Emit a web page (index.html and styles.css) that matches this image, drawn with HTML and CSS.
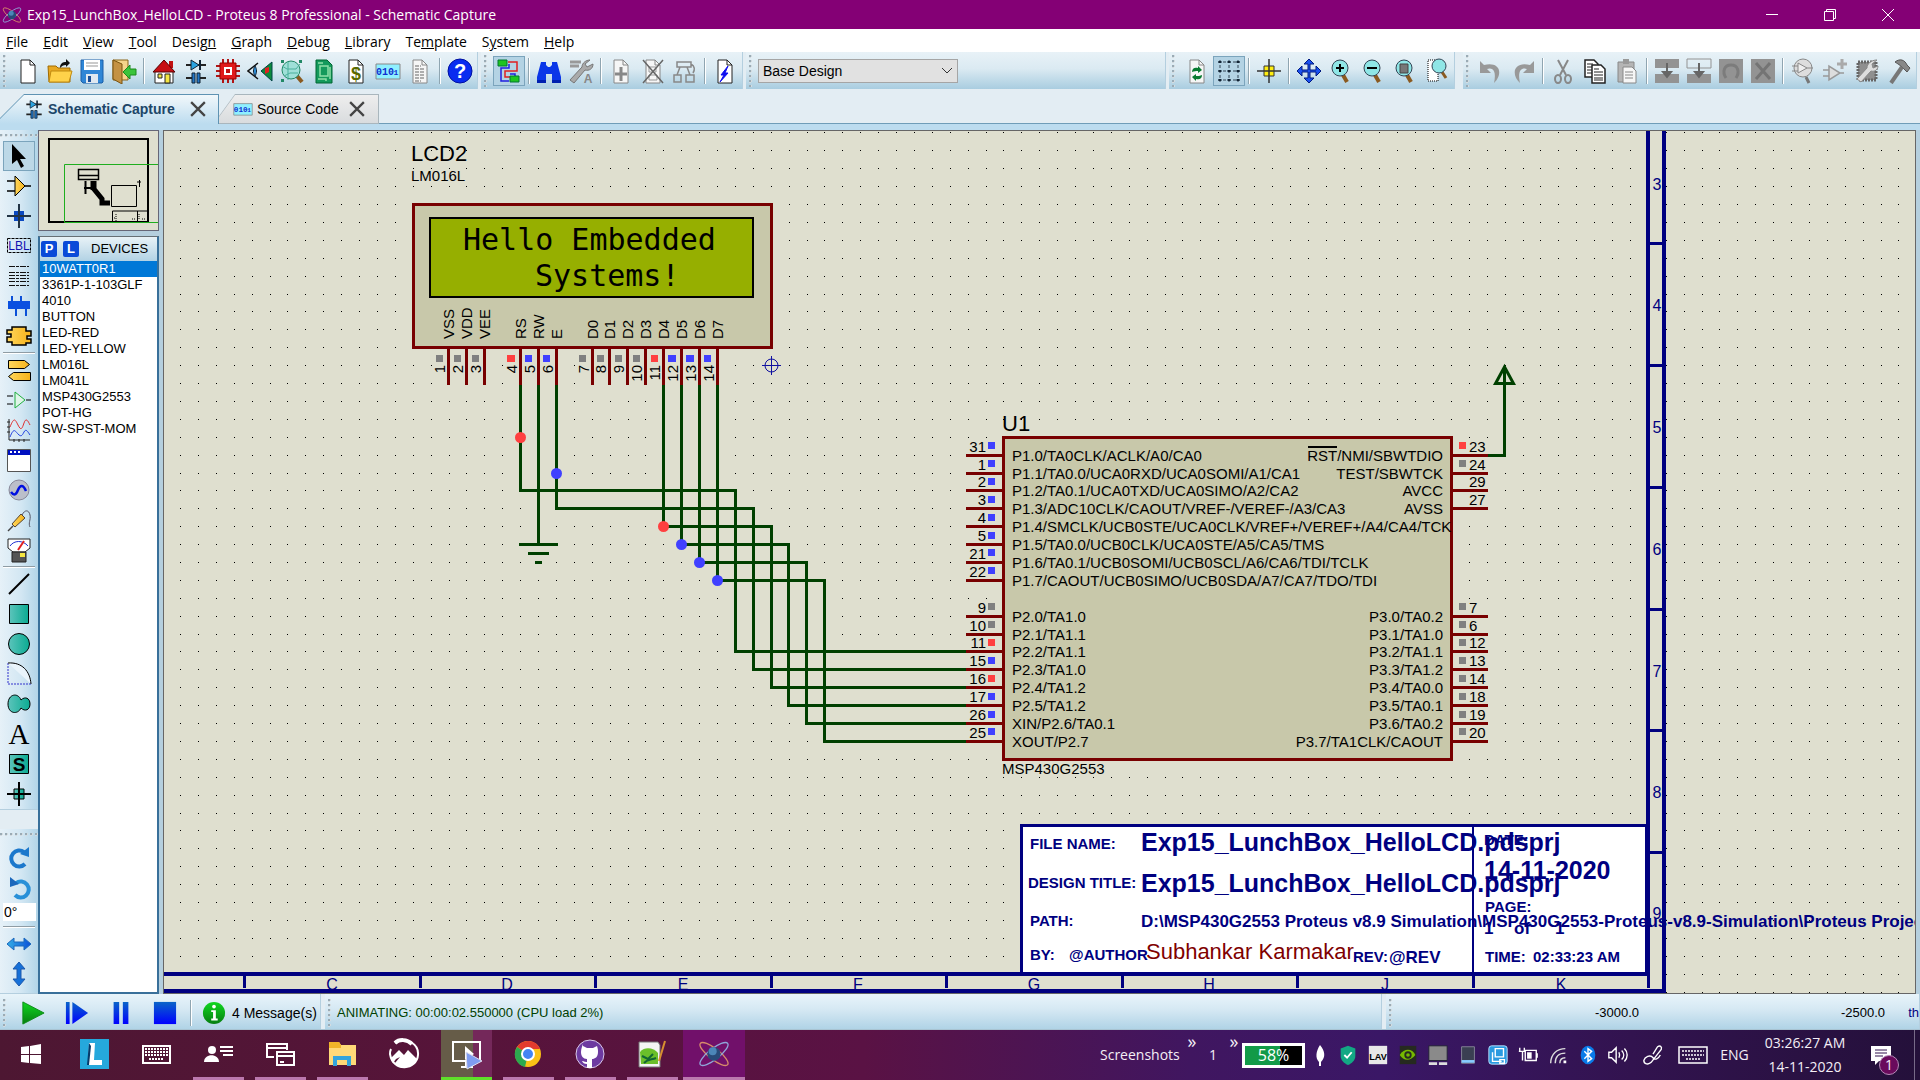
FILE: index.html
```html
<!DOCTYPE html>
<html lang="en">
<head>
<meta charset="utf-8">
<title>Exp15_LunchBox_HelloLCD - Proteus 8 Professional - Schematic Capture</title>
<link rel="stylesheet" href="styles.css">
</head>
<body>
<svg class="defs" aria-hidden="true">
  <defs>
    <linearGradient id="teal"><stop offset="0" stop-color="#5cc4bb"/><stop offset="1" stop-color="#0bab92"/></linearGradient>
    <linearGradient id="gold"><stop offset="0" stop-color="#ffd65c"/><stop offset="1" stop-color="#f5b21a"/></linearGradient>
    <linearGradient id="blue" x2="0" y2="1"><stop offset="0" stop-color="#0a64c8"/><stop offset="1" stop-color="#0000ff"/></linearGradient>
    <linearGradient id="sky"><stop offset="0" stop-color="#35aee6"/><stop offset="1" stop-color="#0a50d8"/></linearGradient>
    <linearGradient id="green" x2="0" y2="1"><stop offset="0" stop-color="#10d820"/><stop offset="1" stop-color="#067d10"/></linearGradient>
  </defs>
  <symbol id="atom" viewBox="0 0 24 24"><g fill="none" stroke-width="1"><ellipse cx="12" cy="12" rx="13" ry="4" transform="rotate(38 12 12)" stroke="#d78c6a"/><ellipse cx="12" cy="12" rx="13" ry="4" transform="rotate(-38 12 12)" stroke="#8fa5d9"/></g><circle cx="12" cy="12" r="5" fill="#284a78"/><circle cx="11" cy="10" r="3" fill="#4c86b8"/></symbol>
  <symbol id="diode" viewBox="0 0 26 26"><path d="M3 7h20M3 20h6M17 20h6" stroke="#222" stroke-width="2"/><path d="M8 2v10l8-5z" fill="#2ba3e0" stroke="#123"/><path d="M17 2v10" stroke="#123" stroke-width="2"/><path d="M9 15h3v10H9zM14 15h3v10h-3z" fill="#2277c8" stroke="#123"/></symbol>
  <symbol id="code" viewBox="0 0 26 26"><path d="M1 6h24v15H1z" fill="#8ff0ff" stroke="#888"/><text x="10" y="17" text-anchor="middle" class="code-text">010</text><text x="21" y="17" text-anchor="middle" class="code-small">1</text></symbol>
  <symbol id="loupe" viewBox="0 0 26 26"><path d="M15 17l4 7" stroke="#8a5a20" stroke-width="4"/><circle cx="12" cy="10" r="8" fill="#8fe6e6" stroke="#345"/></symbol>
  <symbol id="page" viewBox="0 0 26 26"><path d="M6 2h9l5 5v18H6z" fill="#fff" stroke="#222"/><path d="M15 2v5h5" fill="none" stroke="#222"/></symbol>
  <symbol id="page-gray" viewBox="0 0 26 26"><path d="M6 2h9l5 5v18H6z" fill="#f6f6f6" stroke="#888"/><path d="M15 2v5h5" fill="none" stroke="#888"/></symbol>
</svg>

<header class="titlebar">
  <svg class="app-icon"><use href="#atom"/></svg>
  <h1>Exp15_LunchBox_HelloLCD - Proteus 8 Professional - Schematic Capture</h1>
  <div class="window-controls">
    <button type="button" aria-label="Minimize"><svg viewBox="0 0 14 14"><path d="M1 6.500h12"/></svg></button>
    <button type="button" aria-label="Restore"><svg viewBox="0 0 14 14"><path d="M1.500 3.500h9v9h-9zM3.500 3.500v-2h9v9h-2"/></svg></button>
    <button type="button" aria-label="Close"><svg viewBox="0 0 14 14"><path d="M1 1l12 12M13 1L1 13"/></svg></button>
  </div>
</header>

<nav class="menubar">
  <a href="#"><u>F</u>ile</a><a href="#"><u>E</u>dit</a><a href="#"><u>V</u>iew</a><a href="#"><u>T</u>ool</a><a href="#">Desig<u>n</u></a><a href="#"><u>G</u>raph</a><a href="#"><u>D</u>ebug</a><a href="#"><u>L</u>ibrary</a><a href="#">Te<u>m</u>plate</a><a href="#">S<u>y</u>stem</a><a href="#"><u>H</u>elp</a>
</nav>

<div class="toolbars">
  <div class="toolbar">
    <span class="grip"></span>
    <button type="button" aria-label="New"><svg viewBox="0 0 26 26"><use href="#page"/></svg></button>
    <button type="button" aria-label="Open"><svg viewBox="0 0 26 26"><path d="M1 8h8l2 2h12v14H2z" fill="#e8a820" stroke="#a06a00"/><path d="M4 13h21l-3 11H2z" fill="#ffd24a" stroke="#c08a10"/><path d="M13 10c0-5 3-6 6-6V1l4 4-4 4V7c-3 0-4 1-6 3z" fill="#111"/></svg></button>
    <button type="button" aria-label="Save"><svg viewBox="0 0 26 26"><path d="M2 2h22v22l-1 1H4l-2-2z" fill="#2f86d6" stroke="#1b5fa8"/><path d="M5 2h16v10H5z" fill="#fff"/><path d="M7 5h12M7 8h12" stroke="#bbb" stroke-width="1.500"/><path d="M7 16h12v9H7z" fill="#dfe8f0"/><path d="M9 18h3v6H9z" fill="#1b4f98"/></svg></button>
    <button type="button" aria-label="Close project"><svg viewBox="0 0 26 26"><path d="M2 2h15v20H2z" fill="#f5d48a" stroke="#8a6418"/><path d="M2 2l9 4v20l-9-5z" fill="#c49244" stroke="#7a5410"/><path d="M25 11v6h-6v4l-7-7 7-7v4z" fill="#3bc43b" stroke="#1c8a1c"/></svg></button>
    <span class="sep"></span>
    <button type="button" aria-label="Home"><svg viewBox="0 0 26 26"><path d="M4 13h18v12H4z" fill="#fff" stroke="#222"/><path d="M18 3h4v7h-4z" fill="#c01010"/><path d="M2 14L13 2l11 12z" fill="#c80f14" stroke="#500"/><path d="M14 16h5v9h-5z" fill="#f5e642" stroke="#222"/><path d="M7 16h4v4H7z" fill="#f5e642" stroke="#222"/></svg></button>
    <button type="button" aria-label="Schematic"><svg viewBox="0 0 26 26"><use href="#diode"/></svg></button>
    <button type="button" aria-label="PCB layout"><svg viewBox="0 0 26 26"><path d="M8 1v24M13 1v24M18 1v24M1 8h24M1 13h24M1 18h24" stroke="#b01515" stroke-width="2"/><path d="M5 5h16v16H5z" fill="#e01a1a" stroke="#900"/><path d="M9 9h8v8H9z" fill="#fff"/><path d="M11 11h4v4h-4z" fill="#c01010"/></svg></button>
    <button type="button" aria-label="3D viewer"><svg viewBox="0 0 26 26"><path d="M14 13l11-9v19z" fill="#0c8a3c" stroke="#044"/><path d="M18 10l4-1v5l-4 2z" fill="#e02020"/><path d="M11 5L1 13l10 8" fill="none" stroke="#111" stroke-width="1.500"/><path d="M8 8c2 3 2 7 0 10-2-3-2-7 0-10z" fill="#2b8ed8" stroke="#123"/></svg></button>
    <button type="button" aria-label="Gerber viewer"><svg viewBox="0 0 26 26"><path d="M18 18l5 6" stroke="#8a5a20" stroke-width="4"/><circle cx="12" cy="12" r="9" fill="#9fe0d8" stroke="#286"/><path d="M3 8l5 3h9l4-5M5 18l6-3h8M9 4v18" stroke="#4bb09c" fill="none"/><path d="M2 2h3v3H2zM20 2h3v3h-3zM2 21h3v3H2z" fill="#286"/></svg></button>
    <button type="button" aria-label="Design explorer"><svg viewBox="0 0 26 26"><path d="M5 2h11l5 5v18H5z" fill="#149a5c" stroke="#063"/><path d="M9 8h8v10H9zM7 5h5M7 21h8v2M19 9v12" fill="none" stroke="#8fe0a8" stroke-width="1.500"/></svg></button>
    <button type="button" aria-label="Bill of materials"><svg viewBox="0 0 26 26"><use href="#page"/><text x="13" y="22" text-anchor="middle" class="dollar">$</text></svg></button>
    <button type="button" aria-label="Source code"><svg viewBox="0 0 26 26"><use href="#code"/></svg></button>
    <button type="button" aria-label="Project notes"><svg viewBox="0 0 26 26"><use href="#page-gray"/><path d="M8 8h6M8 11h9M8 14h9M8 17h9M8 20h9M8 23h6" stroke="#666" stroke-dasharray="4 1"/></svg></button>
    <span class="sep"></span>
    <button type="button" aria-label="Help"><svg viewBox="0 0 26 26"><circle cx="13" cy="13" r="12" fill="#0a2cf0" stroke="#0010a0"/><text x="13" y="20" text-anchor="middle" class="help-mark">?</text></svg></button>
  </div>

  <div class="toolbar">
    <span class="grip"></span>
    <button type="button" class="active" aria-label="Wire autorouter"><svg viewBox="0 0 26 26"><path d="M12 4h9v9H9v6h8" fill="none" stroke="#e02020" stroke-width="1.500"/><path d="M13 6v4H5v13h8M14 16h5v5" fill="none" stroke="#2020e0" stroke-width="1.500"/><path d="M2 2h9v6H2zM14 18h9v6h-9z" fill="#1fc41f" stroke="#073"/></svg></button>
    <span class="sep"></span>
    <button type="button" aria-label="Search"><svg viewBox="0 0 26 26"><path d="M5 4h5v3l2 2h2l2-2V4h5l4 15v3h-9v-6h-6v6H1v-3z" fill="#0a36e8"/><path d="M1 22h9v3H1zM16 22h9v3h-9z" fill="#0020b0"/></svg></button>
    <button type="button" aria-label="Property assignment"><svg viewBox="0 0 26 26"><path d="M2 4h11M2 8h9" stroke="#999" stroke-width="3"/><path d="M22 2l-5 4 2 3 6-3c0 5-4 7-8 6L6 25l-4-3L14 9c0-4 4-7 8-7z" fill="#aaa" stroke="#777"/><text x="20" y="25" text-anchor="middle" class="gray-a">A</text></svg></button>
    <span class="sep"></span>
    <button type="button" aria-label="New sheet"><svg viewBox="0 0 26 26"><use href="#page-gray"/><path d="M13 9v14M7 16h12" stroke="#888" stroke-width="3"/></svg></button>
    <button type="button" aria-label="Remove sheet"><svg viewBox="0 0 26 26"><use href="#page-gray"/><path d="M9 9h7v5H9zM9 17h8v5H9z" fill="none" stroke="#999"/><path d="M3 2l20 23M23 2L3 25" stroke="#666" stroke-width="1.500"/></svg></button>
    <button type="button" aria-label="Parent sheet"><svg viewBox="0 0 26 26"><path d="M5 4h14v5H5zM2 17h7v7H2zM14 17h8v7h-8zM8 9l-3 8M15 9l3 8M19 6c4 2 4 6 2 9" fill="none" stroke="#888" stroke-width="1.500"/></svg></button>
    <span class="sep"></span>
    <button type="button" aria-label="Electrical rules check"><svg viewBox="0 0 26 26"><use href="#page"/><path d="M16 8l-7 9h3l-4 7 8-9h-3z" fill="#1010f0" stroke="#1010f0"/></svg></button>
  </div>

  <div class="toolbar toolbar-variant">
    <span class="grip"></span>
    <div class="variant">
      <select aria-label="Design variant"><option>Base Design</option></select>
      <svg viewBox="0 0 12 8"><path d="M1 1l5 5 5-5"/></svg>
    </div>
  </div>

  <div class="toolbar">
    <span class="grip"></span>
    <button type="button" aria-label="Redraw"><svg viewBox="0 0 26 26"><use href="#page-gray"/><path d="M8 14c0-4 3-5 6-4V8l4 4-4 3v-2c-2 0-4 0-6 1zM18 17c0 4-3 5-6 4v2l-4-4 4-3v2c2 0 4 0 6-1z" fill="#087a30"/></svg></button>
    <button type="button" class="active" aria-label="Grid"><svg viewBox="0 0 26 26"><path d="M2 4h22M2 13h22M2 22h22M4 2v22M13 2v22M22 2v22" stroke="#345" stroke-dasharray="3 2"/><path d="M4 3v2M13 3v2M22 3v2M4 12v2M13 12v2M22 12v2M4 21v2M13 21v2M22 21v2" stroke="#123" stroke-width="3"/></svg></button>
    <span class="sep"></span>
    <button type="button" aria-label="Origin"><svg viewBox="0 0 26 26"><path d="M8 8h10v10H8z" fill="#ffee10" stroke="#333"/><path d="M13 1v24M1 13h24" stroke="#333" stroke-width="1.500"/></svg></button>
    <span class="sep"></span>
    <button type="button" aria-label="Pan"><svg viewBox="0 0 26 26"><path d="M13 1l5 5h-4v6h6V8l5 5-5 5v-4h-6v6h4l-5 5-5-5h4v-6H6v4l-5-5 5-5v4h6V6H8z" fill="#1a50f0" stroke="#001a80"/></svg></button>
    <button type="button" aria-label="Zoom in"><svg viewBox="0 0 26 26"><use href="#loupe"/><path d="M12 6v8M8 10h8" stroke="#000" stroke-width="2"/></svg></button>
    <button type="button" aria-label="Zoom out"><svg viewBox="0 0 26 26"><use href="#loupe"/><path d="M7 10h10" stroke="#000" stroke-width="2"/></svg></button>
    <button type="button" aria-label="Zoom to sheet"><svg viewBox="0 0 26 26"><use href="#loupe"/><path d="M8 6h8v9H8z" fill="#777" stroke="#444"/></svg></button>
    <button type="button" aria-label="Zoom to area"><svg viewBox="0 0 26 26"><path d="M4 2h10v21H4z" fill="#fff" stroke="#000" stroke-dasharray="1 1"/><path d="M18 14l4 6" stroke="#8a5a20" stroke-width="3"/><circle cx="15" cy="8" r="7" fill="#8fe6e6" stroke="#345"/></svg></button>
  </div>

  <div class="toolbar">
    <span class="grip"></span>
    <button type="button" aria-label="Undo"><svg viewBox="0 0 26 26"><path d="M2 3v12h11l-4-4c5-2 10 1 7 14 9-8 7-22-10-18z" fill="#999"/></svg></button>
    <button type="button" aria-label="Redo"><svg viewBox="0 0 26 26"><path d="M24 3v12H13l4-4c-5-2-10 1-7 14C1 17 3 3 20 7z" fill="#999"/></svg></button>
    <span class="sep"></span>
    <button type="button" aria-label="Cut"><svg viewBox="0 0 26 26"><path d="M8 2l8 15M18 2l-8 15" stroke="#888" stroke-width="2"/><g fill="none" stroke="#888" stroke-width="2"><ellipse cx="8" cy="21" rx="3" ry="4"/><ellipse cx="18" cy="21" rx="3" ry="4"/></g></svg></button>
    <button type="button" aria-label="Copy"><svg viewBox="0 0 26 26"><path d="M3 2h9l4 4v13H3z" fill="#fff" stroke="#222" stroke-width="1.500"/><path d="M5 6h6M5 9h5M5 12h5M5 15h5" stroke="#222"/><path d="M10 7h9l4 4v14H10z" fill="#fff" stroke="#222" stroke-width="1.500"/><path d="M12 11h5M12 14h9M12 17h9M12 20h9M12 22h9" stroke="#222"/></svg></button>
    <button type="button" aria-label="Paste"><svg viewBox="0 0 26 26"><path d="M4 4h16v20H4z" fill="#b5b5b5" stroke="#888"/><path d="M9 1h6v5H9z" fill="#999"/><path d="M9 9h9l4 4v12H9z" fill="#f6f6f6" stroke="#888"/><path d="M11 14h8M11 17h8M11 20h8" stroke="#888"/></svg></button>
    <span class="sep"></span>
    <button type="button" aria-label="Block copy"><svg viewBox="0 0 26 26"><path d="M1 1h24v9H1zM1 16h24v9H1z" fill="#939393"/><path d="M13 5v13M9 14l4 5 4-5z" stroke="#666" fill="#666" stroke-width="2"/></svg></button>
    <button type="button" aria-label="Block move"><svg viewBox="0 0 26 26"><path d="M1 1h24v9H1z" fill="none" stroke="#939393"/><path d="M1 16h24v9H1z" fill="#939393"/><path d="M13 5v13M9 14l4 5 4-5z" stroke="#666" fill="#666" stroke-width="2"/></svg></button>
    <button type="button" aria-label="Block rotate"><svg viewBox="0 0 26 26"><path d="M1 1h24v24H1z" fill="#939393"/><path d="M8 20c-4-6-2-13 5-13s9 7 5 13" fill="none" stroke="#7c7c7c" stroke-width="3"/></svg></button>
    <button type="button" aria-label="Block delete"><svg viewBox="0 0 26 26"><path d="M1 1h24v24H1z" fill="#939393"/><path d="M6 5l14 16M20 5L6 21" stroke="#747474" stroke-width="3"/></svg></button>
    <span class="sep"></span>
    <button type="button" aria-label="Pick parts"><svg viewBox="0 0 26 26"><path d="M16 19l3 6" stroke="#777" stroke-width="3"/><circle cx="13" cy="10" r="9" fill="#ddd" stroke="#888"/><path d="M8 5v10l9-5zM2 8h6M2 13h6M17 10h6" fill="#eee" stroke="#888"/></svg></button>
    <button type="button" aria-label="Make device"><svg viewBox="0 0 26 26"><path d="M7 8v14l11-7zM1 12h6M1 18h6M18 15h4" fill="#ddd" stroke="#999" stroke-width="1.500"/><path d="M20 1v10M15 6h10" stroke="#aaa" stroke-width="3"/></svg></button>
    <button type="button" aria-label="Packaging tool"><svg viewBox="0 0 26 26"><path d="M4 4h18v18H4z" fill="#8f8f8f" stroke="#666" stroke-dasharray="2 1" stroke-width="3"/><path d="M23 2l-5 4 1 4 5-2c0 4-4 6-7 5L7 24l-4-3 10-11c0-4 4-8 10-8z" fill="#ddd" stroke="#888"/></svg></button>
    <button type="button" aria-label="Decompose"><svg viewBox="0 0 26 26"><path d="M9 4c5-4 10-2 12 3l3 3-3 4-4-4C14 7 12 6 9 4z" fill="#888" stroke="#555"/><path d="M16 9L5 25" stroke="#777" stroke-width="4"/></svg></button>
  </div>
</div>

<div class="tabs">
  <div class="tab current">
    <button type="button" class="tab-name"><svg viewBox="0 0 26 26"><use href="#diode"/></svg>Schematic Capture</button>
    <button type="button" class="tab-close" aria-label="Close Schematic Capture"><svg viewBox="0 0 14 14"><path d="M1 1l12 12M13 1L1 13"/></svg></button>
  </div>
  <div class="tab">
    <button type="button" class="tab-name"><svg viewBox="0 0 26 26"><use href="#code"/></svg>Source Code</button>
    <button type="button" class="tab-close" aria-label="Close Source Code"><svg viewBox="0 0 14 14"><path d="M1 1l12 12M13 1L1 13"/></svg></button>
  </div>
</div>

<main class="workspace">
  <div class="modes">
    <div class="mode-group">
      <span class="grip-h"></span>
      <button type="button" class="active" aria-label="Selection"><svg viewBox="0 0 26 26"><path d="M6 1v20l5-4 4 8 3-2-4-7h6z" fill="#000"/></svg></button>
      <button type="button" aria-label="Component"><svg viewBox="0 0 26 26"><path d="M1 8h8M1 18h8M19 13h6" stroke="#000" stroke-width="1.500"/><path d="M9 3v20l10-10z" fill="url(#gold)" stroke="#000"/></svg></button>
      <button type="button" aria-label="Junction dot"><svg viewBox="0 0 26 26"><path d="M8 8h10v10H8z" fill="#0a48c0"/><path d="M13 1v24M1 13h24" stroke="#234" stroke-width="2"/></svg></button>
      <button type="button" aria-label="Wire label"><svg viewBox="0 0 26 26"><path d="M1.500 5.500h23v14h-23z" fill="none" stroke="#000" stroke-dasharray="3 1"/><text x="13" y="17" text-anchor="middle" class="lbl">LBL</text></svg></button>
      <button type="button" aria-label="Text script"><svg viewBox="0 0 26 26"><path d="M3 3.500h20M3 9.500h20M3 12.500h20M3 15.500h20M3 18.500h20M3 22.500h20" stroke="#111" stroke-dasharray="6 1 3 1"/></svg></button>
      <button type="button" aria-label="Buses"><svg viewBox="0 0 26 26"><path d="M6 3v9M15 3v9M10 15v8M20 15v8" stroke="#0a50d8" stroke-width="2"/><path d="M2 8h22v8H2z" fill="#0a50e0"/></svg></button>
      <button type="button" aria-label="Subcircuit"><svg viewBox="0 0 26 26"><path d="M6 4h14v4h5v5h-4v3h4v4h-5v2H6v-3H1v-5h4v-3H1V7h5z" fill="url(#gold)" stroke="#000" stroke-width="1.500"/></svg></button>
      <span class="sep-h"></span>
      <button type="button" aria-label="Terminals"><svg viewBox="0 0 26 26"><path d="M2.500 3.500h16l5 4-5 4h-16zM24.500 15.500h-17l-5 4 5 4h17z" fill="url(#gold)" stroke="#000"/></svg></button>
      <button type="button" aria-label="Device pins"><svg viewBox="0 0 26 26"><path d="M1 9h6M1 17h6M20 13h5" stroke="#000"/><path d="M9 5v16l10-8z" fill="#dff5e8" stroke="#20b040"/></svg></button>
      <button type="button" aria-label="Graph"><svg viewBox="0 0 26 26"><path d="M3 2v21h21M1 5h3M1 10h3M1 15h3M8 22v3M13 22v3M18 22v3" stroke="#222" fill="none"/><path d="M4 10c4-10 5-8 8-2s4 4 6-2 4-2 6 2" fill="none" stroke="#e03030"/><path d="M4 20c4-10 5-6 8-3s4 2 6-2 4 0 6 3" fill="none" stroke="#2040e0"/></svg></button>
      <button type="button" aria-label="Active popup"><svg viewBox="0 0 26 26"><path d="M1.500 2.500h23v22h-23z" fill="#fff" stroke="#555"/><path d="M2 3h22v5H2z" fill="#0010c0"/><path d="M4 5h2M8 5h2M12 5h2" stroke="#fff" stroke-width="2"/></svg></button>
      <button type="button" aria-label="Generator"><svg viewBox="0 0 26 26"><circle cx="13" cy="13" r="10" fill="#bbbfca" stroke="#889"/><path d="M5 15c3 4 5 3 7-2s5-6 8 1" fill="none" stroke="#0010e0" stroke-width="2.500"/></svg></button>
      <button type="button" aria-label="Probe"><svg viewBox="0 0 26 26"><path d="M2 24l5-5" stroke="#444" stroke-width="1.500"/><path d="M6 17L15 7l4 4-10 9z" fill="url(#gold)" stroke="#543"/><path d="M16 8c3-6 7-5 8 0s-2 8 0 12" fill="none" stroke="#556"/></svg></button>
      <button type="button" aria-label="Instruments"><svg viewBox="0 0 26 26"><path d="M2 2h22v9l-5 4H7l-5-4z" fill="#fff" stroke="#222"/><path d="M4 9c4-6 13-6 18 0" fill="none" stroke="#2030d0"/><path d="M12 13l6-9" stroke="#e02020" stroke-width="2"/><path d="M6 15h14v10H6z" fill="#555" stroke="#222"/><path d="M14 16h5v4h-5z" fill="#f5e642"/></svg></button>
      <span class="sep-h"></span>
      <button type="button" aria-label="Line"><svg viewBox="0 0 26 26"><path d="M3 23L23 3" stroke="#000" stroke-width="2"/></svg></button>
      <button type="button" aria-label="Box"><svg viewBox="0 0 26 26"><path d="M3.500 3.500h19v19h-19z" fill="url(#teal)" stroke="#000"/></svg></button>
      <button type="button" aria-label="Circle"><svg viewBox="0 0 26 26"><circle cx="13" cy="13" r="10.500" fill="url(#teal)" stroke="#000"/></svg></button>
      <button type="button" aria-label="Arc"><svg viewBox="0 0 26 26"><path d="M2 2v21h23" fill="none" stroke="#33c" stroke-dasharray="2 1"/><path d="M2 2c14-1 22 8 23 21" fill="#eaf4fb" stroke="#000"/></svg></button>
      <button type="button" aria-label="Path"><svg viewBox="0 0 26 26"><path d="M15 9c4-4 9-2 9 4s-5 8-9 4c-3 7-13 6-13-4s10-12 13-4z" fill="url(#teal)" stroke="#000"/></svg></button>
      <button type="button" aria-label="Text"><svg viewBox="0 0 26 26"><text x="13" y="23" text-anchor="middle" class="big-a">A</text></svg></button>
      <button type="button" aria-label="Symbol"><svg viewBox="0 0 26 26"><path d="M3.500 3.500h19v19h-19z" fill="url(#teal)" stroke="#000"/><text x="13" y="20" text-anchor="middle" class="big-s">S</text></svg></button>
      <button type="button" aria-label="Marker"><svg viewBox="0 0 26 26"><path d="M8 8h10v10H8z" fill="url(#teal)" stroke="#000"/><path d="M13 1v24M1 13h24" stroke="#000" stroke-width="2"/></svg></button>
    </div>
    <div class="mode-group mode-orient">
      <span class="grip-h"></span>
      <button type="button" aria-label="Rotate clockwise"><svg viewBox="0 0 26 26"><path d="M19 19a8 8 0 1 1-1-12" fill="none" stroke="#1c78cc" stroke-width="4"/><path d="M14 9l9-7v10z" fill="#1c78cc"/></svg></button>
      <button type="button" aria-label="Rotate anticlockwise"><svg viewBox="0 0 26 26"><path d="M9 20a8 8 0 1 0 1-12" fill="none" stroke="#2890d8" stroke-width="4"/><path d="M13 9L4 2v10z" fill="#1c68bc"/></svg></button>
      <input type="text" aria-label="Rotation" value="0°">
      <span class="sep-h"></span>
      <button type="button" aria-label="Mirror horizontally"><svg viewBox="0 0 26 26"><path d="M1 13l7-6v4h10V7l7 6-7 6v-4H8v4z" fill="url(#sky)" stroke="#1c68bc"/></svg></button>
      <button type="button" aria-label="Mirror vertically"><svg viewBox="0 0 26 26"><path d="M13 1l6 7h-4v10h4l-6 7-6-7h4V8H7z" fill="#1570d8" stroke="#1c58ac"/></svg></button>
    </div>
  </div>

  <aside class="side">
    <svg class="overview" role="img" aria-label="Sheet overview">
      <g transform="translate(-39 -131)" fill="none" stroke="#000">
        <path d="M49 139h99v83H49z" stroke-width="2"/>
        <path d="M78.500 169.500h20v10h-20zM78.500 175.500h20" stroke-width="1.500"/>
        <path d="M85.500 181v13M91.500 181v9M84 188h10" stroke-width="2"/>
        <path d="M94 181v8l8 10v4h8" stroke-width="5"/>
        <path d="M111.500 185.500h25v21h-25zM139.500 187v-7M137 182h4M112.500 221v-10h35M137.500 211v10"/>
        <path d="M116 214v7M114 218h2M132 219h3M139 214v6M142 219h4" stroke-dasharray="1 1"/>
        <path d="M165 164.500H64.500v58H165" stroke="#1fae1f"/>
      </g>
    </svg>
    <section class="devices">
      <header><button type="button">P</button><button type="button">L</button><h2>DEVICES</h2></header>
      <ul>
        <li class="selected">10WATT0R1</li><li>3361P-1-103GLF</li><li>4010</li><li>BUTTON</li><li>LED-RED</li><li>LED-YELLOW</li><li>LM016L</li><li>LM041L</li><li>MSP430G2553</li><li>POT-HG</li><li>SW-SPST-MOM</li>
      </ul>
    </section>
  </aside>

  <svg class="sheet" role="img" aria-label="Schematic sheet">
    <g transform="translate(-164 -131)">
      <path class="grid" d="M180 132.500h1736M180 150.500h1736M180 168.500h1736M180 186.500h1736M180 204.500h1736M180 222.500h1736M180 240.500h1736M180 258.500h1736M180 276.500h1736M180 294.500h1736M180 311.500h1736M180 329.500h1736M180 347.500h1736M180 365.500h1736M180 383.500h1736M180 401.500h1736M180 419.500h1736M180 437.500h1736M180 455.500h1736M180 473.500h1736M180 490.500h1736M180 508.500h1736M180 526.500h1736M180 544.500h1736M180 562.500h1736M180 580.500h1736M180 598.500h1736M180 616.500h1736M180 634.500h1736M180 651.500h1736M180 669.500h1736M180 687.500h1736M180 705.500h1736M180 723.500h1736M180 741.500h1736M180 759.500h1736M180 777.500h1736M180 795.500h1736M180 813.500h1736M180 830.500h1736M180 848.500h1736M180 866.500h1736M180 884.500h1736M180 902.500h1736M180 920.500h1736M180 938.500h1736M180 956.500h1736M180 974.500h1736M180 992.500h1736"/>

      <!-- sheet frame with its column letters and row numbers -->
      <g class="zones" text-anchor="middle">
        <text x="332" y="990">C</text><text x="507" y="990">D</text><text x="683" y="990">E</text><text x="858" y="990">F</text><text x="1034" y="990">G</text><text x="1209" y="990">H</text><text x="1385" y="990">J</text><text x="1561" y="990">K</text>
        <text x="1657" y="190">3</text><text x="1657" y="311">4</text><text x="1657" y="433">5</text><text x="1657" y="555">6</text><text x="1657" y="677">7</text><text x="1657" y="798">8</text><text x="1657" y="919">9</text>
      </g>
      <path d="M1021.500 825.500h625v148h-625z" fill="#fff" stroke="#000080" stroke-width="3"/>
      <path d="M1473 825v149" stroke="#000080" stroke-width="2"/>
      <g class="frame">
        <path d="M1648 130v846M160 974h1490M1664 130v863M160 990.500h1506" stroke-width="4"/>
        <path d="M1650 243.500h12M1650 365.500h12M1650 487.500h12M1650 609.500h12M1650 730.500h12M1650 852.500h12M244.500 976v12M420.500 976v12M595.500 976v12M771.500 976v12M946.500 976v12M1122.500 976v12M1297.500 976v12M1473.500 976v12M1648.500 976v12" stroke-width="3"/>
      </g>

      <g class="block">
        <text x="1030" y="849">FILE NAME:</text><text x="1028" y="888">DESIGN TITLE:</text><text x="1030" y="926">PATH:</text><text x="1030" y="960">BY:</text><text x="1069" y="960">@AUTHOR</text><text x="1353" y="962">REV:</text>
        <text x="1484" y="845">DATE:</text><text x="1485" y="912">PAGE:</text><text x="1485" y="962">TIME:</text><text x="1533" y="962">02:33:23 AM</text>
        <g class="mid"><text x="1141" y="927">D:\MSP430G2553 Proteus v8.9 Simulation\MSP430G2553-Proteus-v8.9-Simulation\Proteus Projects</text><text x="1389" y="963">@REV</text><text x="1484" y="934">1</text><text x="1514" y="934">of</text><text x="1555" y="934">1</text></g>
        <g class="large"><text x="1141" y="851">Exp15_LunchBox_HelloLCD.pdsprj</text><text x="1141" y="892">Exp15_LunchBox_HelloLCD.pdsprj</text><text x="1484" y="879">14-11-2020</text></g>
        <text x="1146" y="959" class="author">Subhankar Karmakar</text>
      </g>

      <!-- wires, ground and supply -->
      <g class="wires">
        <path d="M520.500 385v105.500h215v161H966M556.500 385v123.500h197v161H966M663.500 385v141.500h108v161H966M681.500 385v159.500h107v161H966M699.500 385v177.500h107v161H966M717.500 385v195.500h107v161H966M538.500 385v159M519 544.500h39M528 553.500h21M535 562.500h7M1488 455.500h16.500V367M1495.500 383.500h18L1504.500 367z"/>
      </g>
      <g fill="#ff4040"><circle cx="520.500" cy="437.500" r="5.500"/><circle cx="663.500" cy="526.500" r="5.500"/></g>
      <g fill="#4040ff"><circle cx="556.500" cy="473.500" r="5.500"/><circle cx="681.500" cy="544.500" r="5.500"/><circle cx="699.500" cy="562.500" r="5.500"/><circle cx="717.500" cy="580.500" r="5.500"/></g>
      <path d="M762 365.500h19M771.500 356v19M765 365.500a6.500 6.500 0 1 0 13 0a6.500 6.500 0 1 0-13 0" fill="none" stroke="#1010a0"/>

      <!-- LCD module -->
      <text x="411" y="161" class="ref">LCD2</text><text x="411" y="181">LM016L</text>
      <path class="part" d="M413.500 204.500h358v143h-358z"/>
      <path d="M430 218h323v79H430z" fill="#96af00" stroke="#000" stroke-width="2"/>
      <g class="lcd"><text x="463" y="250">Hello Embedded</text><text x="535" y="286">Systems!</text></g>
      <path class="pins" d="M448.500 349v36M466.500 349v36M484.500 349v36M520.500 349v36M538.500 349v36M556.500 349v36M592.500 349v36M609.500 349v36M627.500 349v36M645.500 349v36M663.500 349v36M681.500 349v36M699.500 349v36M717.500 349v36"/>
      <g transform="translate(454 339) rotate(-90)">
        <text y="0">VSS</text><text y="18">VDD</text><text y="36">VEE</text><text y="72">RS</text><text y="90">RW</text><text y="108">E</text><text y="144">D0</text><text y="161">D1</text><text y="179">D2</text><text y="197">D3</text><text y="215">D4</text><text y="233">D5</text><text y="251">D6</text><text y="269">D7</text>
      </g>
      <g transform="translate(445 365) rotate(-90)" text-anchor="end">
        <text y="0">1</text><text y="18">2</text><text y="36">3</text><text y="72">4</text><text y="90">5</text><text y="108">6</text><text y="144">7</text><text y="161">8</text><text y="179">9</text><text y="197">10</text><text y="215">11</text><text y="233">12</text><text y="251">13</text><text y="269">14</text>
      </g>
      <path fill="#808080" d="M436 355h7v7h-7zM454 355h7v7h-7zM472 355h7v7h-7zM579 355h7v7h-7zM597 355h7v7h-7zM615 355h7v7h-7zM633 355h7v7h-7z"/>
      <path fill="#ff4040" d="M507 355h8v7h-8zM651 355h7v7h-7z"/>
      <path fill="#4040ff" d="M525 355h7v7h-7zM543 355h7v7h-7zM668 355h8v7h-8zM686 355h8v7h-8zM704 355h7v7h-7z"/>

      <!-- microcontroller -->
      <text x="1002" y="431" class="ref">U1</text><text x="1002" y="774">MSP430G2553</text>
      <path class="part" d="M1003.500 437.500h448v322h-448z"/>
      <path class="pins" d="M966 455.500h36M966 473.500h36M966 490.500h36M966 508.500h36M966 526.500h36M966 544.500h36M966 562.500h36M966 580.500h36M966 616.500h36M966 634.500h36M966 651.500h36M966 669.500h36M966 687.500h36M966 705.500h36M966 723.500h36M966 741.500h36M1453 455.500h35M1453 473.500h35M1453 490.500h35M1453 508.500h35M1453 616.500h35M1453 634.500h35M1453 651.500h35M1453 669.500h35M1453 687.500h35M1453 705.500h35M1453 723.500h35M1453 741.500h35"/>
      <g>
        <text x="1012" y="461">P1.0/TA0CLK/ACLK/A0/CA0</text><text x="1012" y="479">P1.1/TA0.0/UCA0RXD/UCA0SOMI/A1/CA1</text><text x="1012" y="496">P1.2/TA0.1/UCA0TXD/UCA0SIMO/A2/CA2</text><text x="1012" y="514">P1.3/ADC10CLK/CAOUT/VREF-/VEREF-/A3/CA3</text><text x="1012" y="532">P1.4/SMCLK/UCB0STE/UCA0CLK/VREF+/VEREF+/A4/CA4/TCK</text><text x="1012" y="550">P1.5/TA0.0/UCB0CLK/UCA0STE/A5/CA5/TMS</text><text x="1012" y="568">P1.6/TA0.1/UCB0SOMI/UCB0SCL/A6/CA6/TDI/TCLK</text><text x="1012" y="586">P1.7/CAOUT/UCB0SIMO/UCB0SDA/A7/CA7/TDO/TDI</text>
        <text x="1012" y="622">P2.0/TA1.0</text><text x="1012" y="640">P2.1/TA1.1</text><text x="1012" y="657">P2.2/TA1.1</text><text x="1012" y="675">P2.3/TA1.0</text><text x="1012" y="693">P2.4/TA1.2</text><text x="1012" y="711">P2.5/TA1.2</text><text x="1012" y="729">XIN/P2.6/TA0.1</text><text x="1012" y="747">XOUT/P2.7</text>
      </g>
      <g text-anchor="end">
        <text x="1443" y="461">RST/NMI/SBWTDIO</text><text x="1443" y="479">TEST/SBWTCK</text><text x="1443" y="496">AVCC</text><text x="1443" y="514">AVSS</text>
        <text x="1443" y="622">P3.0/TA0.2</text><text x="1443" y="640">P3.1/TA1.0</text><text x="1443" y="657">P3.2/TA1.1</text><text x="1443" y="675">P3.3/TA1.2</text><text x="1443" y="693">P3.4/TA0.0</text><text x="1443" y="711">P3.5/TA0.1</text><text x="1443" y="729">P3.6/TA0.2</text><text x="1443" y="747">P3.7/TA1CLK/CAOUT</text>
        <text x="986" y="452">31</text><text x="986" y="470">1</text><text x="986" y="487">2</text><text x="986" y="505">3</text><text x="986" y="523">4</text><text x="986" y="541">5</text><text x="986" y="559">21</text><text x="986" y="577">22</text><text x="986" y="613">9</text><text x="986" y="631">10</text><text x="986" y="648">11</text><text x="986" y="666">15</text><text x="986" y="684">16</text><text x="986" y="702">17</text><text x="986" y="720">26</text><text x="986" y="738">25</text>
      </g>
      <path d="M1308 447h29" stroke="#000" stroke-width="2"/>
      <g>
        <text x="1469" y="452">23</text><text x="1469" y="470">24</text><text x="1469" y="487">29</text><text x="1469" y="505">27</text><text x="1469" y="613">7</text><text x="1469" y="631">6</text><text x="1469" y="648">12</text><text x="1469" y="666">13</text><text x="1469" y="684">14</text><text x="1469" y="702">18</text><text x="1469" y="720">19</text><text x="1469" y="738">20</text>
      </g>
      <path fill="#4040ff" d="M988 442h7v7h-7zM988 460h7v7h-7zM988 478h7v7h-7zM988 496h7v7h-7zM988 514h7v7h-7zM988 532h7v7h-7zM988 549h7v7h-7zM988 567h7v7h-7zM988 657h7v7h-7zM988 693h7v7h-7zM988 711h7v7h-7zM988 728h7v7h-7z"/>
      <path fill="#ff4040" d="M988 639h7v7h-7zM988 675h7v7h-7zM1459 442h7v7h-7z"/>
      <path fill="#808080" d="M988 603h7v7h-7zM988 621h7v7h-7zM1459 460h7v7h-7zM1459 603h7v7h-7zM1459 621h7v7h-7zM1459 639h7v7h-7zM1459 657h7v7h-7zM1459 675h7v7h-7zM1459 693h7v7h-7zM1459 711h7v7h-7zM1459 728h7v7h-7z"/>
    </g>
  </svg>
</main>

<footer class="status">
  <div class="status-group transport">
    <span class="grip"></span>
    <button type="button" aria-label="Run"><svg viewBox="0 0 26 26"><path d="M2 1l23 12L2 25z" fill="url(#green)" stroke="#0a8a14"/></svg></button>
    <button type="button" aria-label="Step"><svg viewBox="0 0 26 26"><path d="M1 1h4v24H1zM8 1l17 12L8 25z" fill="url(#blue)"/></svg></button>
    <button type="button" aria-label="Pause"><svg viewBox="0 0 26 26"><path d="M5 1h6v24H5zM15 1h6v24h-6z" fill="url(#blue)"/></svg></button>
    <button type="button" aria-label="Stop"><svg viewBox="0 0 26 26"><path d="M1 1h24v24H1z" fill="url(#blue)"/></svg></button>
    <span class="sep"></span>
    <button type="button" class="messages"><svg viewBox="0 0 26 26"><circle cx="13" cy="13" r="12" fill="url(#green)"/><path d="M10 10h5v9h2v2h-7v-2h2v-7h-2z" fill="#fff"/><circle cx="13" cy="6" r="2" fill="#fff"/></svg>4 Message(s)</button>
  </div>
  <div class="status-group status-main"><span class="grip"></span><span class="animating">ANIMATING: 00:00:02.550000 (CPU load 2%)</span></div>
  <div class="status-group coords"><span class="grip"></span><output>-3000.0</output><output>-2500.0</output><span class="unit">th</span></div>
</footer>

<div class="taskbar">
  <div class="apps">
    <button type="button" aria-label="Start"><svg viewBox="0 0 32 32"><path d="M4 9l8-1v8H4zM13 8l11-2v10H13zM4 17h8v8l-8-1zM13 17h11v9l-11-1z" fill="#fff"/></svg></button>
    <button type="button" aria-label="L"><svg viewBox="0 0 32 32"><path d="M1 1h29v30H1z" fill="#25a8dc"/><path d="M10 5h6l-1 17h8v5H9z" fill="#fff"/><path d="M10 5L8 27l2 0 2-19z" fill="#063a6a"/></svg></button>
    <button type="button" aria-label="Touch keyboard"><svg viewBox="0 0 32 32"><path d="M2 8h27v17H2z" fill="none" stroke="#fff" stroke-width="2"/><path d="M4 11h23M4 14h23M4 17h23M8 21h15" stroke="#fff" stroke-width="2" stroke-dasharray="2 1"/></svg></button>
    <button type="button" class="open" aria-label="Contacts"><svg viewBox="0 0 32 32"><circle cx="9" cy="12" r="4" fill="#fff"/><path d="M1 24c0-9 15-9 15 0z" fill="#fff"/><path d="M17 9h13M17 13h13M20 17h10" stroke="#fff" stroke-width="2"/></svg></button>
    <button type="button" class="open" aria-label="Remote desktop"><svg viewBox="0 0 32 32"><path d="M9 19H2V6h20v6M2 10h19M12 14h17v13H12zM12 18h17" fill="none" stroke="#fff" stroke-width="2"/><path d="M15 24h4" stroke="#fff" stroke-width="2"/></svg></button>
    <button type="button" class="open" aria-label="File Explorer"><svg viewBox="0 0 32 32"><path d="M2 4h10l2 3h15v20H2z" fill="#ffd978"/><path d="M2 4h10l2 3v3H2z" fill="#f0b429"/><path d="M6 28V18h18v10h-4v-6H10v6z" fill="#33a4dc"/></svg></button>
    <button type="button" aria-label="Gaming"><svg viewBox="0 0 32 32"><path d="M6 5C17-2 30 6 29 17c-1 15-25 18-28-1 0-2 0-3 1-5" fill="none" stroke="#fff" stroke-width="2"/><path d="M2 20l8-8 5 5 4-5 9 9c-6 11-19 11-22 4l5-6-4 2-3 4z" fill="#fff"/><path d="M6 5c4-4 12-4 17 1" stroke="#fff" stroke-width="4" fill="none"/></svg></button>
    <button type="button" class="open recording" aria-label="Screen recorder"><svg viewBox="0 0 32 32"><path d="M2 4h27v19H2zM10 29h12M15 24v5" fill="none" stroke="#fff" stroke-width="2"/><path d="M14 8l9 8-9 6z" fill="#fff"/><path d="M15 14l16 9-15 8z" fill="#7f9cf0" stroke="#dde"/></svg></button>
    <button type="button" class="open" aria-label="Chrome"><svg viewBox="0 0 32 32"><circle cx="15" cy="16" r="13" fill="#fbc116"/><path d="M15 16L4 9a13 13 0 0 1 23 2H15z" fill="#e33b2e"/><path d="M15 16l-3 13A13 13 0 0 1 4 9z" fill="#2da94f"/><circle cx="15" cy="16" r="6" fill="#4285f4" stroke="#fff" stroke-width="2"/></svg></button>
    <button type="button" class="open" aria-label="GitHub Desktop"><svg viewBox="0 0 32 32"><circle cx="15" cy="16" r="14" fill="#6d3aa0" stroke="#d8c8e8"/><path d="M8 8l4 2h6l4-2c1 3 1 4 1 6 0 5-3 7-6 7v9h-5v-4c-3 0-4-1-5-3 2 0 2 1 5 1v-3c-4 0-6-3-6-7 0-3 1-5 2-8z" fill="#fff"/></svg></button>
    <button type="button" class="open" aria-label="Notepad++"><svg viewBox="0 0 32 32"><path d="M2 4h19l2 3v22H2z" fill="#f4f4f4" stroke="#777"/><path d="M3 14c5-6 14-4 18 1v11H4z" fill="#6abf2a"/><path d="M5 18l6 3 5-5M7 25c4-4 7-3 12-5" stroke="#163" stroke-width="2" fill="none"/><path d="M28 3l-6 20" stroke="#d89030" stroke-width="2"/></svg></button>
    <button type="button" class="open focused" aria-label="Proteus"><svg viewBox="0 0 32 32"><use href="#atom"/></svg></button>
  </div>
  <div class="tray">
    <span class="toolband">Screenshots</span><button type="button" class="more">»</button>
    <span class="desktop-no">1</span><button type="button" class="more">»</button>
    <span class="battery">58%</span>
    <span class="leaf"><svg viewBox="0 0 24 24"><path d="M12 2c5 6 6 12 1 17v4h-2v-4c-4-4-3-11 1-17z" fill="#fff"/></svg></span>
    <span class="tray-icon"><svg viewBox="0 0 24 24"><path d="M12 2l8 3v8c0 5-4 8-8 10-4-2-8-5-8-10V5z" fill="#13a884"/><path d="M8 12l3 3 5-6" fill="none" stroke="#fff" stroke-width="2"/></svg></span>
    <span class="tray-icon"><svg viewBox="0 0 24 24"><path d="M2 2h20v20H2z" fill="#e8e8e8"/><text x="12" y="17" text-anchor="middle" class="lav">LAV</text></svg></span>
    <span class="tray-icon"><svg viewBox="0 0 24 24"><path d="M3 2h18v20H3z" fill="#262a20"/><path d="M3 12c5-8 14-7 17 0-5 7-13 7-17 0z" fill="#76b900"/><circle cx="12" cy="12" r="3" fill="none" stroke="#262a20" stroke-width="2"/></svg></span>
    <span class="tray-icon"><svg viewBox="0 0 24 24"><path d="M2 2h20v16H2z" fill="#8a8a8a" stroke="#223"/><path d="M2 20h9v3H2zM13 20h9v3h-9z" fill="#ddd"/></svg></span>
    <span class="tray-icon"><svg viewBox="0 0 24 24"><path d="M5 3h14v18H5z" fill="#3a3f52" stroke="#889"/><path d="M5 19h14" stroke="#8cf" stroke-width="3"/></svg></span>
    <span class="tray-icon"><svg viewBox="0 0 24 24"><rect x="2" y="2" width="20" height="20" rx="3" fill="#2a9ae0" stroke="#bfe4ff"/><path d="M9 5h9v9H9zM6 9v10h10M14 17h5v4h-5z" fill="none" stroke="#fff" stroke-width="1.500"/></svg></span>
    <span class="tray-icon"><svg viewBox="0 0 24 24"><path d="M9 7h12v11H9zM22 10v5M3 4v4h5V4M6 8v10M2 8h7" fill="none" stroke="#fff" stroke-width="1.500"/><path d="M11 9h5v7h-5z" fill="#fff"/></svg></span>
    <span class="tray-icon"><svg viewBox="0 0 24 24"><path d="M4 21C4 11 11 5 20 5M9 21c0-7 4-11 11-11M14 21c0-4 2-6 6-6" fill="none" stroke="#ddd" stroke-width="1.500"/><path d="M18 18h3v3h-3z" fill="#fff"/></svg></span>
    <span class="tray-icon"><svg viewBox="0 0 24 24"><ellipse cx="12" cy="12" rx="8" ry="10" fill="#0a7ae8"/><path d="M8 8l8 8-4 3V5l4 3-8 8" fill="none" stroke="#fff" stroke-width="1.500"/></svg></span>
    <span class="tray-icon"><svg viewBox="0 0 24 24"><path d="M2 9h3l5-5v16l-5-5H2zM13 9c1 2 1 4 0 6M16 7c3 3 3 7 0 10M19 5c4 4 4 10 0 14" fill="none" stroke="#fff" stroke-width="1.500"/></svg></span>
    <span class="tray-icon wide"><svg viewBox="0 0 24 24"><path d="M12 11l5-8c3-2 5 0 4 3L10 20c-3 3-8 2-8-2 1-4 7-7 10-3 2 3 6 1 8-3" fill="none" stroke="#fff" stroke-width="1.500"/></svg></span>
    <span class="tray-icon wide"><svg class="kbd" viewBox="0 0 30 20"><path d="M1 2h28v16H1z" fill="none" stroke="#fff" stroke-width="1.500"/><path d="M4 6h22M4 10h22M8 14h14" stroke="#fff" stroke-width="1.500" stroke-dasharray="2 1"/></svg></span>
    <span class="lang">ENG</span>
    <time class="clock">03:26:27 AM<br>14-11-2020</time>
    <button type="button" class="notify"><svg viewBox="0 0 24 24"><path d="M1 3h20v15H9l-4 4v-4H1z" fill="#fff"/><path d="M5 7h12M5 10h12M5 13h8" stroke="#32134f"/></svg><span class="badge">1</span></button>
    <span class="peek"></span>
  </div>
</div>
</body>
</html>
```
FILE: styles.css
```css
* { box-sizing: border-box; }
body {
  margin: 0;
  height: 100vh;
  display: flex;
  flex-direction: column;
  overflow: hidden;
  background: #e3edf3;
  color: #000;
  font: 14px/18px "Liberation Sans", Arial, sans-serif;
}
button { border: 0; padding: 0; background: none; color: inherit; font: inherit; display: flex; align-items: center; justify-content: center; }
svg { display: block; flex: none; }
.defs { position: absolute; width: 0; height: 0; }
h1, h2, ul { margin: 0; padding: 0; font-weight: normal; }

/* title and menu */
.titlebar { flex: none; height: 29px; display: flex; align-items: center; background: #840075; color: #fff; }
.app-icon { width: 20px; height: 24px; margin: 0 5px 0 2px; }
.titlebar h1 { flex: 1; font: 14px/20px "Open Sans", sans-serif; white-space: nowrap; }
.window-controls { display: flex; padding-right: 3px; }
.window-controls button { width: 58px; height: 29px; }
.window-controls svg { width: 14px; height: 14px; fill: none; stroke: #fff; }
.menubar { flex: none; height: 23px; display: flex; gap: 15px; padding: 3px 6px 0; background: #fff; }
.menubar a { color: #000; text-decoration: none; font: 14px/20px "Open Sans", sans-serif; }

/* toolbars */
.toolbars { flex: none; height: 37px; display: flex; gap: 3px; padding-right: 3px; }
.toolbar { display: flex; align-items: center; padding-right: 1px; border-right: 1px solid #b4cfdf; background: linear-gradient(#e8f2f7, #dbeaf2 45%, #a9cde0); }
.toolbar:last-child { margin-left: 5px; }
.grip { align-self: stretch; width: 3px; margin: 3px 6px 2px 3px; background: radial-gradient(circle at 1px 1px, #9aabb5 1px, #fff 2px, transparent 2px) 0 0 / 3px 5px; }
.toolbar button { width: 32px; height: 30px; }
.toolbar button svg { width: 26px; height: 26px; }
.toolbar .active { border: 1px solid #7ba4bc; background: #b4d3e4; }
.sep { width: 2px; height: 26px; margin: 0 3px; background: linear-gradient(90deg, #8fa5b1 50%, #fff 50%); }
.toolbar-variant { flex: 1; }
.variant { position: relative; }
.variant select { width: 200px; height: 24px; padding: 0 4px; border: 1px solid #a5a5a5; border-radius: 0; background: #e1e1e1; color: #000; font: 14px "Liberation Sans", sans-serif; appearance: none; }
.variant svg { position: absolute; right: 5px; top: 8px; width: 12px; height: 8px; fill: none; stroke: #333; }
.code-text { font: bold 10px "Liberation Mono", monospace; fill: #1030d0; }
.code-small { font: bold 8px "Liberation Mono", monospace; fill: #1030d0; }
.dollar { font: bold 18px "Liberation Sans", sans-serif; fill: #5a6a00; }
.help-mark { font: bold 20px "Liberation Sans", sans-serif; fill: #fff; }
.gray-a { font: bold 12px "Liberation Sans", sans-serif; fill: #888; }

/* tabs */
.tabs { flex: none; height: 41px; display: flex; align-items: flex-start; padding-top: 5px; background: linear-gradient(#6f9db8, #6f9db8) 0 34px / 100% 1px no-repeat, linear-gradient(transparent 35px, #bcdcef 35px); }
.tab { position: relative; height: 30px; width: 160px; display: flex; align-items: center; background: #a9b6bd; clip-path: polygon(0 22px, 16px 0, 100% 0, 100% 100%, 0 100%); padding: 0 14px; justify-content: space-between; }
.tab::before { content: ""; position: absolute; inset: 1px 1px 1px 0; background: linear-gradient(#eee, #d9dcde); clip-path: polygon(0 22px, 16px 0, 100% 0, 100% 100%, 0 100%); }
.tab button { position: relative; }
.tab.current { width: 219px; background: #5f93b3; clip-path: polygon(0 24px, 24px 0, 100% 0, 100% 100%, 0 100%); padding: 0 13px 0 24px; font-weight: bold; color: #1d4669; }
.tab.current::before { inset: 1px 1px 0 0; background: linear-gradient(#f2f8fb, #bcdcef); clip-path: polygon(0 24px, 24px 0, 100% 0, 100% 100%, 0 100%); }
.tab-name { gap: 4px; white-space: nowrap; }
.tab-name svg { width: 20px; height: 20px; }
.tab-close svg { width: 16px; height: 16px; fill: none; stroke: #444; stroke-width: 2; }

/* workspace */
.workspace { flex: 1; min-height: 0; display: flex; background: #b5cfde; padding-right: 4px; }
.modes { width: 38px; display: flex; flex-direction: column; gap: 19px; background: #e3edf3; }
.mode-group { display: flex; flex-direction: column; align-items: center; border-bottom: 1px solid #b4cfdf; background: linear-gradient(90deg, #e6f1f8, #d3e7f3 55%, #b2d5e8); }
.mode-group button { width: 32px; height: 30px; }
.mode-group button svg { width: 26px; height: 26px; }
.mode-group .active { border: 1px solid #7ba4bc; background: #bcd8e7; }
.grip-h { align-self: stretch; height: 3px; margin: 4px 0; background: radial-gradient(circle at 1px 1px, #9aabb5 1px, #fff 2px, transparent 2px) 0 0 / 5px 3px; }
.sep-h { width: 32px; height: 2px; margin: 1px 0; background: linear-gradient(#8f9ca4 50%, #fff 50%); }
.mode-group input { width: 33px; height: 18px; border: 0; padding: 0 0 1px 1px; margin: 0 0 4px 1px; font: 14px "Liberation Sans", sans-serif; }
.mode-orient { flex: 1; }
.mode-orient .grip-h { margin-bottom: 7px; }
.lbl { font: 12px "Liberation Sans", sans-serif; fill: #1010b0; }
.big-a { font: 29px "Liberation Serif", serif; }
.big-s { font: bold 19px "Liberation Sans", sans-serif; }
.side { width: 121px; display: flex; flex-direction: column; gap: 5px; }
.overview { width: 100%; height: 101px; border: 1px solid #667; background: #dfdfcf; }
.devices { flex: 1; border: 1px solid #667; border-width: 1px 2px 2px; border-color: #666f75 #39709a #39709a; background: #fff; }
.devices header { height: 24px; display: flex; align-items: center; gap: 6px; padding-left: 1px; background: linear-gradient(#e8f2f7, #b2d2e4); }
.devices header button { width: 16px; height: 16px; border-radius: 2px; background: #0a4ad8; color: #fff; font: bold 13px/16px "Liberation Sans", sans-serif; }
.devices h2 { padding-left: 6px; font-size: 13px; }
.devices ul { list-style: none; font-size: 13px; line-height: 16px; }
.devices li { padding-left: 2px; }
.devices .selected { background: #0078d7; color: #fff; }
.sheet { flex: 1; min-width: 0; height: 100%; margin-left: 4px; border: 1px solid #666; background: #dfdfcf; }

/* schematic */
.sheet text { font: 15px "Liberation Sans", Arial, sans-serif; }
.sheet .ref { font-size: 22px; }
.grid { stroke: #000; fill: none; stroke-dasharray: 1 16.900; shape-rendering: crispEdges; }
.sheet .zones text { font-size: 16px; fill: #000080; }
.frame { stroke: #000080; fill: none; shape-rendering: crispEdges; }
.sheet .block text { font-weight: bold; fill: #000080; }
.sheet .block .mid text { font-size: 17px; }
.sheet .block .large text { font-size: 25px; }
.sheet .block .author { font-size: 22px; font-weight: normal; fill: #800000; }
.wires { stroke: #004000; stroke-width: 3; fill: none; }
.part { fill: #c8c8aa; stroke: #780000; stroke-width: 3; }
.pins { stroke: #780000; stroke-width: 3; fill: none; }
.sheet .lcd text { font: 30px "DejaVu Sans Mono", monospace; }

/* simulation bar */
.status { flex: none; height: 36px; display: flex; gap: 4px; border-bottom: 1px solid #a9c4d2; background: #e3edf3; }
.status-group { display: flex; align-items: center; padding-top: 2px; background: linear-gradient(#e8f4fa, #d5e8f3 45%, #b0d3e6); border-right: 1px solid #b4cfdf; }
.transport { width: 321px; }
.transport .grip { margin-right: 5px; }
.transport button { width: 44px; height: 30px; }
.transport button svg { width: 24px; height: 24px; }
.transport .messages { width: auto; gap: 6px; padding-left: 7px; white-space: nowrap; }
.status-main { flex: 1; }
.animating { color: #004000; font-size: 13px; }
.coords { width: 534px; font-size: 13px; }
.coords output { text-align: right; width: 241px; }
.coords output + output { width: 246px; }
.unit { margin-left: auto; color: #000080; }

/* taskbar */
.taskbar { flex: none; height: 50px; display: flex; justify-content: space-between; background: linear-gradient(90deg, #4d1732, #57143a 25%, #5a1244 45%, #401660 62%, #3a1766 72%, #32134f 85%, #24103a); color: #f4eef6; font: 14px/24px "Open Sans", sans-serif; }
.apps { display: flex; gap: 11px; padding-left: 7px; }
.apps button { width: 51px; border-bottom: 3px solid transparent; }
.apps svg { width: 32px; height: 32px; }
.apps .open { border-bottom-color: #bb78ae; }
.apps .recording { border-bottom-color: #5fe02a; background: linear-gradient(90deg, #665c48 62%, #74285a 62%); }
.apps .focused { background: #71106a; width: 62px; margin-left: -6px; }
.tray { display: flex; align-items: center; white-space: nowrap; }
.more { width: 26px; height: 40px; align-items: flex-start; font-size: 18px; line-height: 12px; }
.toolband { width: 79px; }
.desktop-no { width: 16px; text-align: center; }
.battery { width: 63px; height: 25px; margin: 0 2px 0 -5px; border: 3px solid #fff; background: linear-gradient(90deg, #129a48 62%, #000 62%); color: #fff; text-align: center; font-size: 16px; line-height: 19px; }
.leaf, .leaf svg { width: 26px; height: 24px; }
.tray-icon { width: 30px; display: flex; justify-content: center; }
.tray-icon svg { width: 22px; height: 22px; }
.tray-icon.wide { width: 40px; }
.tray-icon .kbd { width: 30px; height: 20px; }
.lav { font: bold 10px "Liberation Sans", sans-serif; }
.lang { width: 43px; text-align: center; }
.clock { width: 98px; text-align: center; }
.notify { position: relative; width: 56px; height: 50px; margin-right: 4px; }
.notify svg { width: 24px; height: 24px; }
.badge { position: absolute; left: 25px; top: 25px; width: 20px; height: 20px; border: 1px solid #b58ab8; border-radius: 50%; background: #6a0a5c; line-height: 18px; text-align: center; }
.peek { width: 6px; height: 50px; border-left: 1px solid #776a88; }
```
